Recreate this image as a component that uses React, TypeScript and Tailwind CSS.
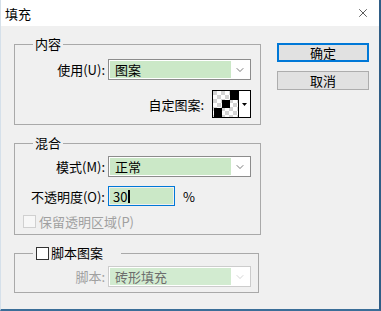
import { ChevronDown, X } from 'lucide-react'

const font = "font-['Noto_Sans_CJK_SC','Microsoft_YaHei',sans-serif]"

function Select({ value, disabled }: { value: string; disabled?: boolean }) {
  return (
    <div
      className={
        'flex h-[21px] w-[143px] items-center border bg-white p-px ' +
        (disabled ? 'border-[#cccccc]' : 'border-[#8c8c8c]')
      }
    >
      <div
        className={
          'flex h-full flex-1 items-center pl-[5px] leading-none ' +
          (disabled ? 'bg-[#d2ebd0] text-[#6d6d6d]' : 'bg-[#cbe8c7] text-black')
        }
      >
        {value}
      </div>
      <div className="flex w-[18px] justify-center">
        <ChevronDown size={12} strokeWidth={1.3} className={disabled ? 'text-[#bdbdbd]' : 'text-[#333]'} />
      </div>
    </div>
  )
}

function PatternSwatch() {
  const checks = []
  for (let y = 0; y < 7; y++) {
    for (let x = 0; x < 7; x++) {
      if ((x + y) % 2 === 0) checks.push(<rect key={`${x}-${y}`} x={1 + x * 4} y={1 + y * 4} width={4} height={4} fill="#d4d4d4" />)
    }
  }
  return (
    <svg width="39" height="28" viewBox="0 0 39 28">
      <rect x="0.5" y="0.5" width="38" height="27" fill="#fff" stroke="#000" />
      <g clipPath="url(#sw)">
        <clipPath id="sw">
          <rect x="1" y="1" width="25" height="26" />
        </clipPath>
        {checks}
        <rect x="18" y="1" width="8" height="9" fill="#000" />
        <rect x="10" y="10" width="8" height="8" fill="#000" />
        <rect x="2" y="18" width="8" height="9" fill="#000" />
      </g>
      <line x1="26.5" y1="1" x2="26.5" y2="27" stroke="#000" />
      <polygon points="30,13 35,13 32.5,16" fill="#000" />
    </svg>
  )
}

function Button({ label, primary }: { label: string; primary?: boolean }) {
  return (
    <div
      className={
        'flex h-[19px] w-[92px] items-center justify-center bg-[#e1e1e1] text-[13px] leading-none ' +
        (primary ? 'border-2 border-[#0078d7]' : 'border border-[#adadad]')
      }
    >
      {label}
    </div>
  )
}

export default function App() {
  return (
    <div
      className={`flex h-[311px] w-[381px] flex-col overflow-hidden border-b-2 border-l border-r-2 border-b-[#3b6e98] border-l-[#d5e0ea] border-r-[#2f5d86] bg-[#f0f0f0] text-[13px] text-black ${font}`}
    >
      <div className="flex h-[26px] shrink-0 items-center justify-between bg-white pl-[4px] pr-[9px]">
        <span className="leading-none">填充</span>
        <X size={14} strokeWidth={1.1} className="text-black" />
      </div>

      <div className="flex flex-1 pl-[13px] pt-[9px]">
        <div className="flex w-[246px] flex-col">
          <fieldset className="border border-[#a9a9a9] pb-[6px] pr-[9px]">
            <legend className="ml-[18px] px-[2px] leading-[18px]">内容</legend>
            <div className="mt-[6px] flex items-center">
              <span className="w-[90px] text-right leading-none">使用(U):</span>
              <div className="ml-[3px]">
                <Select value="图案" />
              </div>
            </div>
            <div className="mt-[10px] flex items-center justify-end">
              <span className="leading-none">自定图案:</span>
              <div className="ml-[8px] flex">
                <PatternSwatch />
              </div>
            </div>
          </fieldset>

          <fieldset className="mt-[9px] border border-[#a9a9a9] pb-[6px] pr-[9px]">
            <legend className="ml-[18px] px-[2px] leading-[18px]">混合</legend>
            <div className="mt-[4px] flex items-center">
              <span className="w-[90px] text-right leading-none">模式(M):</span>
              <div className="ml-[3px]">
                <Select value="正常" />
              </div>
            </div>
            <div className="mt-[9px] flex items-center">
              <span className="w-[90px] text-right leading-none">不透明度(O):</span>
              <div className="ml-[3px] flex h-[20px] w-[67px] border border-[#0078d7] p-px">
                <div className="flex flex-1 items-center bg-[#cbe8c7] pl-[3px] leading-none">
                  30
                  <span className="ml-px h-[13px] w-[2px] bg-black" />
                </div>
              </div>
              <span className="ml-[8px] leading-none">%</span>
            </div>
            <div className="mt-[9px] flex items-center pl-[8px]">
              <span className="h-[13px] w-[13px] border border-[#d0d0d0] bg-[#f7f7f7]" />
              <span className="ml-[3px] leading-none text-[#a0a0a0]">保留透明区域(P)</span>
            </div>
          </fieldset>

          <fieldset className="mt-[9px] w-[245px] border border-[#a9a9a9] pb-[5px] pr-[7px]">
            <legend className="ml-[18px] flex items-center pl-[3px] pr-[18px] leading-[18px]">
              <span className="h-[13px] w-[13px] border border-[#333] bg-white" />
              <span className="ml-[2px]">脚本图案</span>
            </legend>
            <div className="mt-[4px] flex items-center">
              <span className="w-[90px] text-right leading-none text-[#a0a0a0]">脚本:</span>
              <div className="ml-[3px]">
                <Select value="砖形填充" disabled />
              </div>
            </div>
          </fieldset>
        </div>

        <div className="ml-[17px] mt-[8px] flex flex-col gap-[9px]">
          <Button label="确定" primary />
          <Button label="取消" />
        </div>
      </div>
    </div>
  )
}
